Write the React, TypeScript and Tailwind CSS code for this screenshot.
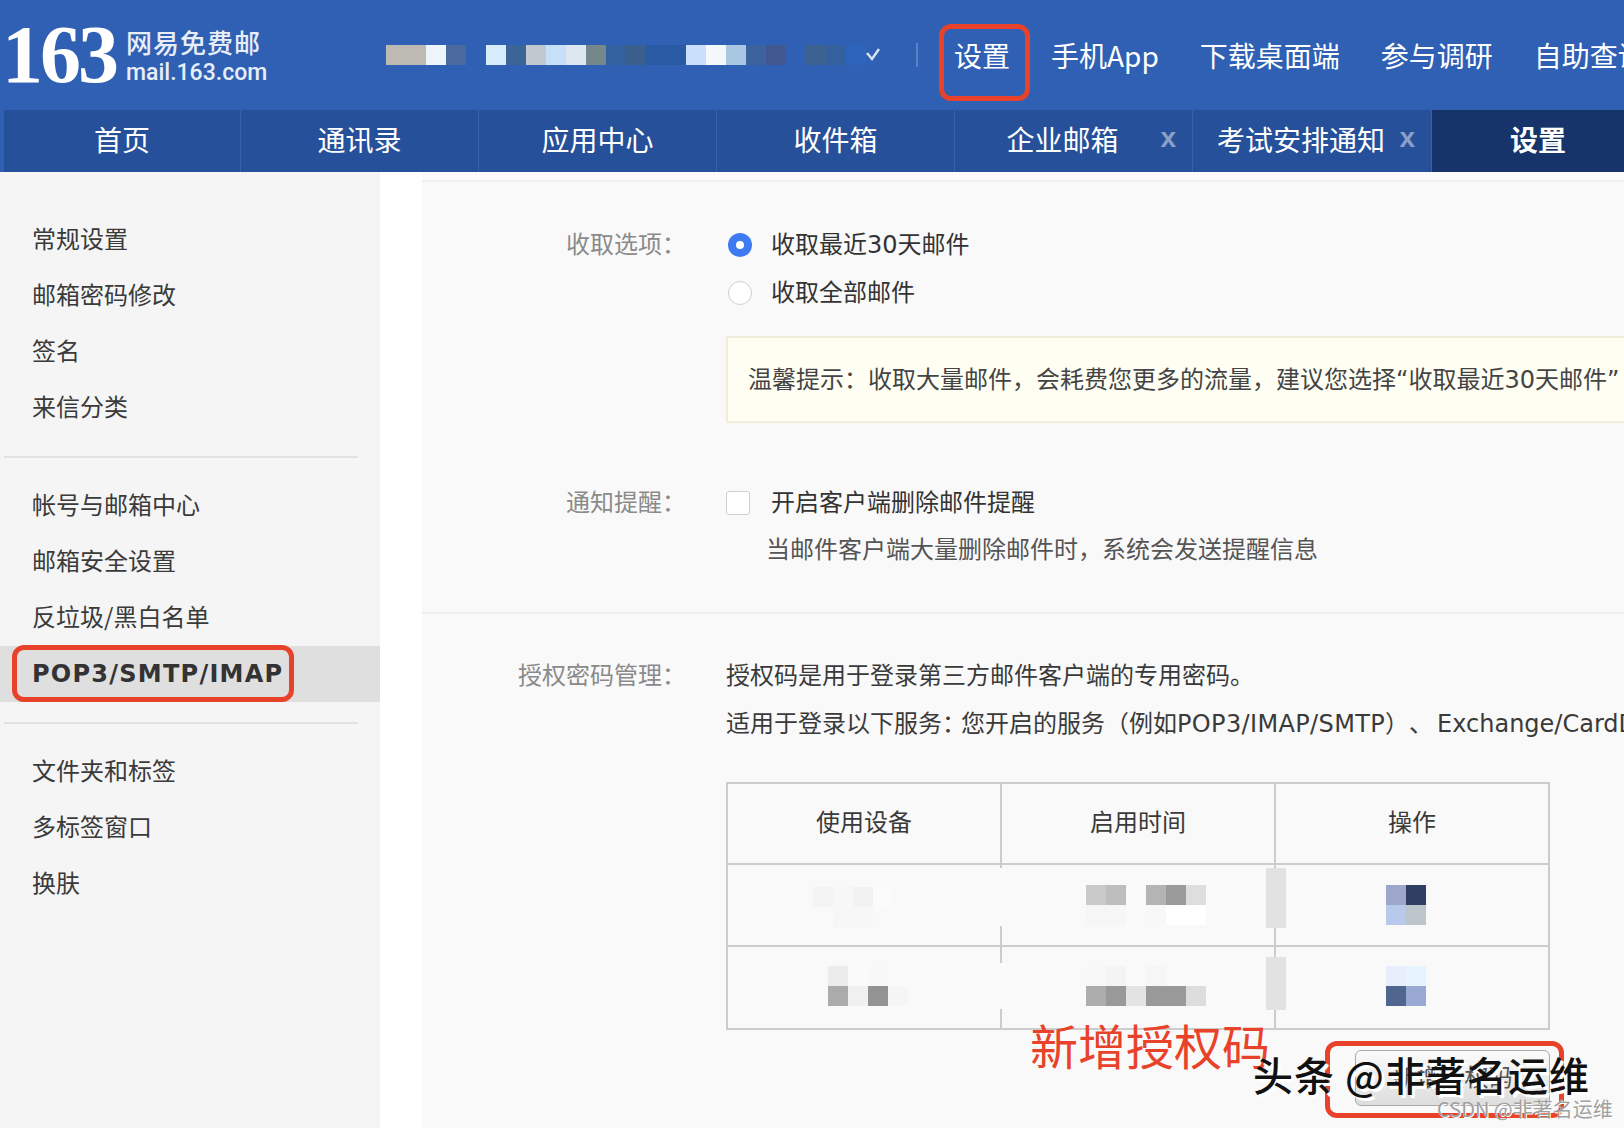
const CJK = "font-['Noto_Sans_CJK_SC','Noto_Sans',sans-serif]";

function Mosaic({ rows, cell = "w-5 h-5" }: { rows: string[][]; cell?: string }) {
  return (
    <div className="flex flex-col">
      {rows.map((r, i) => (
        <div key={i} className="flex">
          {r.map((c, j) => (
            <div key={j} className={cell} style={{ backgroundColor: c }} />
          ))}
        </div>
      ))}
    </div>
  );
}

const userRow = ["#bdb9b3","#bdb9b3","#eef5fa","#4b6b9f","#2f60b3","#d7ecfb","#3a6596","#c2c8d0","#c6e0f9","#dde7ef","#74888b","#33609f","#3b5f8d","#2a5aa3","#2a5aa3","#c9dffb","#f5f8fb","#a9c6e3","#3d639f","#41578f","#2f60b3","#3d6290","#34609e","#2d64bc"];

const side1 = ["常规设置", "邮箱密码修改", "签名", "来信分类"];
const side2 = ["帐号与邮箱中心", "邮箱安全设置", "反垃圾/黑白名单"];
const side3 = ["文件夹和标签", "多标签窗口", "换肤"];

function SideItem({ t }: { t: string }) {
  return <div className="h-14 leading-[52px] pl-8 text-[24px] text-[#3a3a3a] whitespace-nowrap">{t}</div>;
}

function Tab({ t, close, active, w }: { t: string; close?: boolean; active?: boolean; w: string }) {
  return (
    <div className={`${w} relative h-full flex items-center justify-center shrink-0 pb-[4px] text-[28px] text-white ${active ? "bg-[#163469] font-bold pl-[20px]" : "bg-[#27509a] border-r border-[#3562a8]"}`}>
      <span className={close ? "mr-[22px] whitespace-nowrap" : "whitespace-nowrap"}>{t}</span>
      {close && <span className="absolute right-[16px] top-[8px] text-[28px] leading-[40px] font-bold text-[#8ba0c6] font-['Liberation_Sans']">x</span>}
    </div>
  );
}

const cellB = "border-[#cccccc]";

export default function App() {
  return (
    <div className={`relative w-[1624px] h-[1128px] overflow-hidden bg-white ${CJK}`}>
      {/* header */}
      <div className="h-[110px] bg-[#2f60b3] flex items-center text-white">
        <div className="w-[386px] shrink-0 flex items-center pl-[2px] h-full">
          <span className="font-['Liberation_Serif'] font-bold text-[82px] leading-none tracking-[-3px] w-[124px]">163</span>
          <div className="flex flex-col text-[#e8eef8] pt-[4px]">
            <span className="text-[26px] leading-[32px] font-medium tracking-[1px] whitespace-nowrap">网易免费邮</span>
            <span className="text-[23px] leading-[30px] font-medium font-['Roboto'] whitespace-nowrap">mail.163.com</span>
          </div>
        </div>
        <div className="w-[480px] shrink-0 flex items-center h-[20px] overflow-hidden">
          <Mosaic rows={[userRow]} />
        </div>
        <svg className="w-[20px] h-[14px] shrink-0 mr-[30px]" viewBox="0 0 20 14" fill="none">
          <path d="M1 5l5 6 7-10" stroke="#d5e0f2" strokeWidth="2.5" />
        </svg>
        <div className="w-[2px] h-[24px] bg-[#5a82c4] shrink-0" />
        <div className="flex items-center text-[28px] pl-[36px] gap-[41px] whitespace-nowrap">
          <span>设置</span>
          <span>手机App</span>
          <span>下载桌面端</span>
          <span>参与调研</span>
          <span>自助查询</span>
        </div>
      </div>
      {/* tabs */}
      <div className="h-[62px] bg-[#2f60b3] pl-[4px] flex">
        <Tab t="首页" w="w-[237px]" />
        <Tab t="通讯录" w="w-[238px]" />
        <Tab t="应用中心" w="w-[238px]" />
        <Tab t="收件箱" w="w-[238px]" />
        <Tab t="企业邮箱" w="w-[238px]" close />
        <Tab t="考试安排通知" w="w-[239px]" close />
        <Tab t="设置" w="w-[192px]" active />
      </div>
      {/* body */}
      <div className="flex h-[956px]">
        <aside className="w-[380px] shrink-0 bg-[#f5f5f5] pt-[40px]">
          {side1.map((t) => <SideItem key={t} t={t} />)}
          <div className="h-[2px] bg-[#e2e2e2] ml-[4px] w-[354px] my-[20px]" />
          {side2.map((t) => <SideItem key={t} t={t} />)}
          <div className="h-14 leading-[56px] pl-8 bg-[#dfdfdf] text-[24px] font-bold tracking-[1.25px] text-[#333333] font-['DejaVu_Sans'] whitespace-nowrap">POP3/SMTP/IMAP</div>
          <div className="h-[2px] bg-[#e2e2e2] ml-[4px] w-[354px] my-[20px]" />
          {side3.map((t) => <SideItem key={t} t={t} />)}
        </aside>
        <div className="w-[42px] shrink-0 bg-white" />
        <main className="flex-1 bg-[#f9f9f9] min-w-0 overflow-hidden font-['DejaVu_Sans','Noto_Sans_CJK_SC',sans-serif] text-[24px] text-[#3a3a3a] [text-spacing-trim:space-all]">
          <div className="h-[10px] bg-[#fbfbfb] border-b-2 border-[#efefef]" />
          {/* 收取选项 */}
          <div className="flex pt-[45px]">
            <div className="w-[264px] shrink-0 text-right text-[#8a8a8a] leading-[36px]">收取选项：</div>
            <div className="pl-[40px] min-w-0">
              <div className="flex items-center h-[36px]">
                <span className="w-6 h-6 rounded-full bg-[#3e7bf2] flex items-center justify-center ml-[2px]"><span className="w-2 h-2 rounded-full bg-white" /></span>
                <span className="ml-[19px] text-[#333] whitespace-nowrap">收取最近30天邮件</span>
              </div>
              <div className="flex items-center h-[36px] mt-[12px]">
                <span className="w-6 h-6 rounded-full bg-white border border-[#cfcfcf] ml-[2px]" />
                <span className="ml-[19px] text-[#333] whitespace-nowrap">收取全部邮件</span>
              </div>
              <div className="mt-[25px] h-[87px] w-[1000px] bg-[#fefef3] border-2 border-[#eeeeda] pl-[20px] flex items-center whitespace-nowrap text-[#444]">
                温馨提示：收取大量邮件，会耗费您更多的流量，建议您选择“收取最近30天邮件”
              </div>
            </div>
          </div>
          {/* 通知提醒 */}
          <div className="flex pt-[62px]">
            <div className="w-[264px] shrink-0 text-right text-[#8a8a8a] leading-[36px]">通知提醒：</div>
            <div className="pl-[40px]">
              <div className="flex items-center h-[36px]">
                <span className="w-6 h-6 rounded-[3px] bg-white border border-[#cfcfcf]" />
                <span className="ml-[21px] text-[#333] whitespace-nowrap">开启客户端删除邮件提醒</span>
              </div>
              <div className="ml-[40px] mt-[11px] leading-[36px] text-[#555] whitespace-nowrap">当邮件客户端大量删除邮件时，系统会发送提醒信息</div>
            </div>
          </div>
          <div className="h-[2px] bg-[#eeeeee] mt-[44px]" />
          {/* 授权 */}
          <div className="flex pt-[44px]">
            <div className="w-[264px] shrink-0 text-right text-[#8a8a8a] leading-[36px]">授权密码管理：</div>
            <div className="pl-[40px] min-w-0">
              <div className="leading-[36px] whitespace-nowrap">授权码是用于登录第三方邮件客户端的专用密码。</div>
              <div className="leading-[36px] mt-[12px] whitespace-nowrap">适用于登录以下服务<span className="tracking-[-5px]">：</span>您开启的服务（例如<span className="tracking-[0.36px]">POP3/IMAP/SMTP</span>）、<span className="ml-[4px]">Exchange/CardDAV服务</span></div>
              <div className={`mt-[40px] w-[824px] grid grid-cols-[274px_274px_1fr] border-2 ${cellB} text-center`}>
                <div className={`h-[81px] leading-[79px] border-r-2 border-b-2 ${cellB}`}>使用设备</div>
                <div className={`h-[81px] leading-[79px] border-r-2 border-b-2 ${cellB}`}>启用时间</div>
                <div className={`h-[81px] leading-[79px] border-b-2 ${cellB}`}>操作</div>

                <div className={`h-[82px] border-r-2 border-b-2 ${cellB} pl-[85px] pt-[22px]`}>
                  <Mosaic rows={[["#f4f4f4","#f7f7f7","#f2f2f2","#fbfbfb"],["#f9f9f9","#f6f6f6","#f7f7f7","#f9f9f9"]]} />
                </div>
                <div className={`h-[82px] border-r-2 border-b-2 ${cellB} pl-[84px] pt-[20px]`}>
                  <Mosaic rows={[["#c9c9c9","#bdbdbd","#f9f9f9","#b4b4b4","#9b9b9b","#dedede"],["#f6f6f6","#f6f6f6","#f9f9f9","#f8f8f8","#ffffff","#ffffff"]]} />
                </div>
                <div className={`h-[82px] border-b-2 ${cellB} pl-[110px] pt-[20px]`}>
                  <Mosaic rows={[["#9ea6ca","#313e63"],["#b9c9ec","#bcc5c9"]]} />
                </div>

                <div className={`h-[81px] border-r-2 ${cellB} pl-[100px] pt-[19px]`}>
                  <Mosaic rows={[["#ececec","#fafafa","#f8f8f8","#fafafa"],["#ababab","#f0f0f0","#939393","#f5f5f5"]]} />
                </div>
                <div className={`h-[81px] border-r-2 ${cellB} pl-[84px] pt-[19px]`}>
                  <Mosaic rows={[["#f8f8f8","#f4f4f4","#fafafa","#f6f6f6","#fafafa","#fafafa"],["#adadad","#999999","#e3e3e3","#999999","#999999","#dddddd"]]} />
                </div>
                <div className="h-[81px] pl-[110px] pt-[19px]">
                  <Mosaic rows={[["#e8eefb","#e6f4fe"],["#50668f","#9aa8d4"]]} />
                </div>
              </div>
              <div className="mt-[20px] ml-[629px] w-[195px] h-[56px] rounded-[6px] border border-[#aaaaaa] bg-gradient-to-b from-[#fbfbfb] to-[#dddddd] flex items-center justify-center text-[#555] whitespace-nowrap">
                新增授权码
              </div>
            </div>
          </div>
        </main>
      </div>

      {/* annotations and redactions lying over the screenshot */}
      <div className="absolute left-[939px] top-[24px] w-[91px] h-[77px] rounded-[12px] border-[5px] border-[#e8432a]" />
      <div className="absolute left-[12px] top-[645px] w-[282px] h-[57px] rounded-[12px] border-[5px] border-[#e8432a]" />
      <div className="absolute left-[1325px] top-[1041px] w-[239px] h-[77px] rounded-[12px] border-[5px] border-[#e8432a]" />
      <div className="absolute left-[995px] top-[868px] w-[12px] h-[58px] bg-[#fafafa]" />
      <div className="absolute left-[995px] top-[963px] w-[12px] h-[46px] bg-[#fafafa]" />
      <div className="absolute left-[1266px] top-[868px] w-[20px] h-[60px] bg-[#e2e2e2]" />
      <div className="absolute left-[1266px] top-[957px] w-[20px] h-[53px] bg-[#e2e2e2]" />
      <div className="absolute left-[1030px] top-[1012px] text-[48px] leading-[64px] text-[#e8432a] whitespace-nowrap">新增授权码</div>
      <div className="absolute left-[1253px] top-[1049px] text-[40px] leading-[50px] font-medium tracking-[1px] text-[#111] whitespace-nowrap [text-shadow:3px_3px_0_#fff]">头条 @非著名运维</div>
      <div className="absolute left-[1437px] top-[1096px] text-[20px] leading-[26px] text-[#a0a0a0] whitespace-nowrap [text-shadow:1px_1px_0_#fff]">CSDN @非著名运维</div>
    </div>
  );
}
